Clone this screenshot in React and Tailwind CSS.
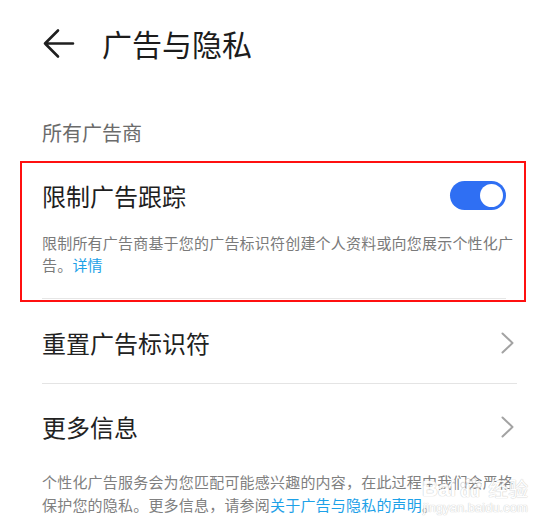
import React from "react";

const font = { fontFamily: '"Noto Sans CJK SC", "Noto Sans", sans-serif' };
const wm = { fontFamily: '"Liberation Sans", sans-serif', textShadow: "0 0 1px #c8c8c8, 0 0 1px #c8c8c8" };

function Chevron() {
  return (
    <svg width="13" height="22" viewBox="0 0 13 22" fill="none">
      <path d="M1.5 1.5 L11.5 11 L1.5 20.5" stroke="#a3a3a3" strokeWidth="2" strokeLinecap="round" strokeLinejoin="round" />
    </svg>
  );
}

export default function App() {
  return (
    <div className="w-[546px] h-[528px] bg-white overflow-hidden relative" style={font}>
      {/* header */}
      <div className="flex items-center pt-[28px] pl-[42px] h-[58px]">
        <svg width="33" height="31" viewBox="0 0 33 31" fill="none">
          <path d="M31 15.5 H3 M16 2.5 L3 15.5 L16 28.5" stroke="#1f1f1f" strokeWidth="2.6" strokeLinecap="round" strokeLinejoin="round" />
        </svg>
        <div className="ml-[27px] text-[30px] leading-[30px] text-[#1c1c1c]">广告与隐私</div>
      </div>

      {/* section label */}
      <div className="mt-[65px] pl-[42px] text-[20px] leading-[20px] text-[#6b6b6b]">所有广告商</div>

      <div className="px-[20px] mt-[18px]">
        {/* red box */}
        <div className="border-2 border-[#ff1010] h-[141px] pl-[20px] pr-[18px] pt-[18px]">
          <div className="flex items-center justify-between h-[29px]">
            <div className="text-[24px] leading-[24px] text-[#1e1e1e]">限制广告跟踪</div>
            <div className="w-[56px] h-[29px] rounded-full bg-[#2f6ff3] flex items-center justify-end pr-[3px]">
              <div className="w-[23px] h-[23px] rounded-full bg-white" />
            </div>
          </div>
          <div className="mt-[22px] text-[15px] leading-[22px] text-[#7a7a7a] tracking-[0.2px] whitespace-nowrap">
            <div>限制所有广告商基于您的广告标识符创建个人资料或向您展示个性化广</div>
            <div>
              告。<span className="text-[#1da1e8]">详情</span>
            </div>
          </div>
          <div className="mt-[22px] border-b border-[#e6e6e6]" />
        </div>

        {/* rows */}
        <div className="ml-[22px] mr-[9px]">
          <div className="h-[82px] flex items-center justify-between pr-[3px] border-b border-[#e4e4e4]">
            <div className="text-[24px] leading-[24px] text-[#222]">重置广告标识符</div>
            <Chevron />
          </div>
          <div className="h-[86px] flex items-center justify-between pr-[3px]">
            <div className="text-[24px] leading-[24px] text-[#222]">更多信息</div>
            <Chevron />
          </div>
          <div className="text-[15px] leading-[23px] text-[#808080] tracking-[0.2px] whitespace-nowrap">
            <div>个性化广告服务会为您匹配可能感兴趣的内容，在此过程中我们会严格</div>
            <div>
              保护您的隐私。更多信息，请参阅<span className="text-[#1da1e8]">关于广告与隐私的声明</span>。
            </div>
          </div>
        </div>
      </div>

      {/* watermark */}
      <div className="absolute left-[422px] top-[478px] flex items-end text-white pointer-events-none opacity-90" style={wm}>
        <span className="text-[22px] leading-[22px] font-bold">Bai</span>
        <span className="relative w-[28px] h-[22px] ml-[1px]">
          <svg width="28" height="22" viewBox="0 0 28 22" className="absolute left-0 top-0">
            <g fill="white" stroke="#cdcdcd" strokeWidth="0.8">
              <ellipse cx="6" cy="7" rx="2.3" ry="2.8" />
              <ellipse cx="11" cy="2.8" rx="2.2" ry="2.5" />
              <ellipse cx="17" cy="2.8" rx="2.2" ry="2.5" />
              <ellipse cx="22" cy="7" rx="2.3" ry="2.8" />
            </g>
          </svg>
          <span className="absolute left-[3px] bottom-0 text-[16px] leading-[16px] font-bold">du</span>
        </span>
        <span className="text-[20px] leading-[22px] ml-[3px]" style={{ ...font, textShadow: wm.textShadow }}>经验</span>
      </div>
      <div className="absolute left-[423px] top-[501px] text-[13px] leading-[13px] text-white pointer-events-none opacity-90" style={wm}>
        jingyan.baidu.com
      </div>
    </div>
  );
}
